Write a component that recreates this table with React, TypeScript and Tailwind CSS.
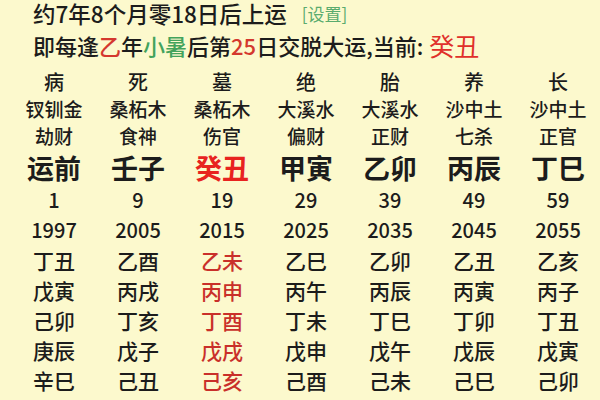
import React from "react";

const RED = "text-[#c9302a]";

type Col = {
  a: string;
  b: string;
  c: string;
  d: string;
  age: string;
  year: string;
  list: string[];
  hl?: boolean;
};

const cols: Col[] = [
  { a: "病", b: "钗钏金", c: "劫财", d: "运前", age: "1", year: "1997", list: ["丁丑", "戊寅", "己卯", "庚辰", "辛巳"] },
  { a: "死", b: "桑柘木", c: "食神", d: "壬子", age: "9", year: "2005", list: ["乙酉", "丙戌", "丁亥", "戊子", "己丑"] },
  { a: "墓", b: "桑柘木", c: "伤官", d: "癸丑", age: "19", year: "2015", list: ["乙未", "丙申", "丁酉", "戊戌", "己亥"], hl: true },
  { a: "绝", b: "大溪水", c: "偏财", d: "甲寅", age: "29", year: "2025", list: ["乙巳", "丙午", "丁未", "戊申", "己酉"] },
  { a: "胎", b: "大溪水", c: "正财", d: "乙卯", age: "39", year: "2035", list: ["乙卯", "丙辰", "丁巳", "戊午", "己未"] },
  { a: "养", b: "沙中土", c: "七杀", d: "丙辰", age: "49", year: "2045", list: ["乙丑", "丙寅", "丁卯", "戊辰", "己巳"] },
  { a: "长", b: "沙中土", c: "正官", d: "丁巳", age: "59", year: "2055", list: ["乙亥", "丙子", "丁丑", "戊寅", "己卯"] },
];

export default function App() {
  return (
    <div
      className="w-[600px] h-[400px] overflow-hidden bg-[#fcf9cd] text-[#1c1c1c] font-medium"
      style={{ fontFamily: '"Noto Sans CJK SC", "Noto Sans", sans-serif' }}
    >
      <div className="pl-[33px] pt-[1px]">
        <div className="h-[25px] flex items-center text-[22.5px] leading-none whitespace-nowrap">
          <span>约7年8个月零18日后上运</span>
          <span className="ml-[15px] text-[17px] text-[#5aab6e] font-normal">[设置]</span>
        </div>
        <div className="mt-[4px] h-[30px] flex items-center text-[22px] leading-none whitespace-nowrap">
          <span>即每逢</span>
          <span className="text-[#d4382e]">乙</span>
          <span>年</span>
          <span className="text-[#43a35c]">小暑</span>
          <span>后第</span>
          <span className="text-[#d4382e]">25</span>
          <span>日交脱大运,当前:</span>
          <span className="ml-[6px] text-[25px] text-[#e0302a] font-normal">癸丑</span>
        </div>
      </div>
      <div className="mt-[8px] pl-[12px] grid grid-cols-[repeat(7,84px)]">
        {cols.map((c, i) => (
          <div key={i} className="flex flex-col items-center whitespace-nowrap">
            <div className="h-[27px] flex items-center text-[20px] leading-none">{c.a}</div>
            <div className="h-[27px] flex items-center text-[19px] leading-none">{c.b}</div>
            <div className="h-[27px] flex items-center text-[19px] leading-none">{c.c}</div>
            <div
              className={`h-[36px] flex items-center text-[27px] font-bold leading-none ${
                c.hl ? "text-[#e8231f]" : ""
              }`}
            >
              {c.d}
            </div>
            <div className="h-[30px] flex items-center text-[20px] leading-none">{c.age}</div>
            <div className="h-[30px] flex items-center text-[20px] leading-none">{c.year}</div>
            {c.list.map((g, j) => (
              <div
                key={j}
                className={`h-[30px] flex items-center text-[21px] leading-none ${c.hl ? RED : ""}`}
              >
                {g}
              </div>
            ))}
          </div>
        ))}
      </div>
    </div>
  );
}
